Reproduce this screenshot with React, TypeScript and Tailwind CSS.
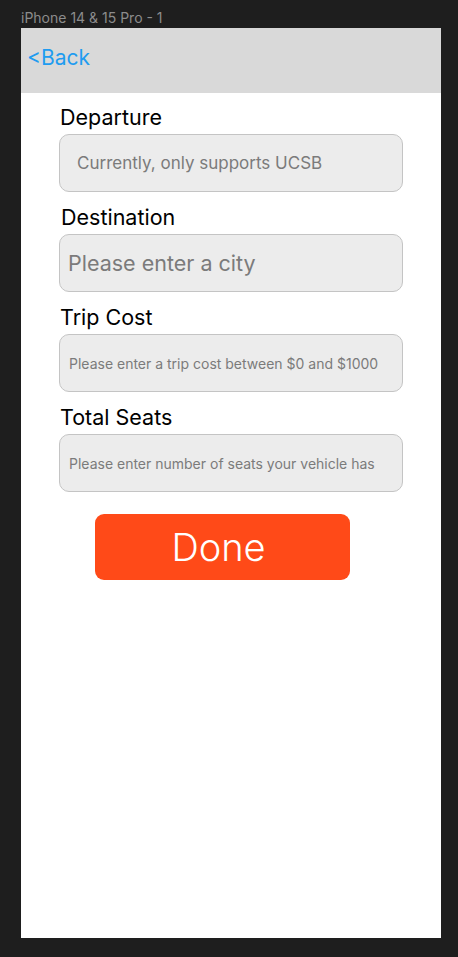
const fields = [
  { label: "Departure", placeholder: "Currently, only supports UCSB", labelClass: "pl-[1px]", inputClass: "pl-[17px] text-[17px]" },
  { label: "Destination", placeholder: "Please enter a city", labelClass: "pl-[2px]", inputClass: "pl-[8px] text-[21.5px]" },
  { label: "Trip Cost", placeholder: "Please enter a trip cost between $0 and $1000", labelClass: "pl-[1px]", inputClass: "pl-[9px] text-[14px]" },
  { label: "Total Seats", placeholder: "Please enter number of seats your vehicle has", labelClass: "pl-[1px]", inputClass: "pl-[9px] text-[14px]" },
];

export default function App() {
  return (
    <div className="min-h-[957px] w-[458px] bg-[#1e1e1e] font-['Inter','Liberation_Sans',sans-serif]">
      <div className="h-[28px] pl-[21px] pt-[9px] text-[14px] leading-[18px] text-[#8c8c8c]">
        iPhone 14 &amp; 15 Pro - 1
      </div>
      <div className="ml-[21px] flex h-[910px] w-[420px] flex-col bg-white">
        {/* Header */}
        <div className="flex h-[65px] items-center bg-[#d9d9d9] pb-[6px] pl-[6px]">
          <button className="text-[21px] leading-none text-[#1f9cf0]">&lt;Back</button>
        </div>

        {/* Form */}
        <div className="flex flex-col pl-[38px] pr-[38px] pt-[15px]">
          {fields.map((f) => (
            <div key={f.label} className="mb-[16px] flex flex-col">
              <label className={`h-[26px] text-[21.5px] leading-[19px] text-black ${f.labelClass}`}>{f.label}</label>
              <input
                placeholder={f.placeholder}
                className={`h-[58px] w-[344px] rounded-[10px] border border-[#c4c4c4] bg-[#ececec] text-[#222] outline-none placeholder:text-[#7b7b7b] ${f.inputClass}`}
              />
            </div>
          ))}
        </div>

        <div className="pl-[74px] pt-[6px]">
          <button className="flex h-[66px] w-[255px] items-center justify-center rounded-[9px] bg-[#ff4a18] pr-[8px] text-[38px] font-light leading-none text-white">
            Done
          </button>
        </div>
      </div>
    </div>
  );
}
